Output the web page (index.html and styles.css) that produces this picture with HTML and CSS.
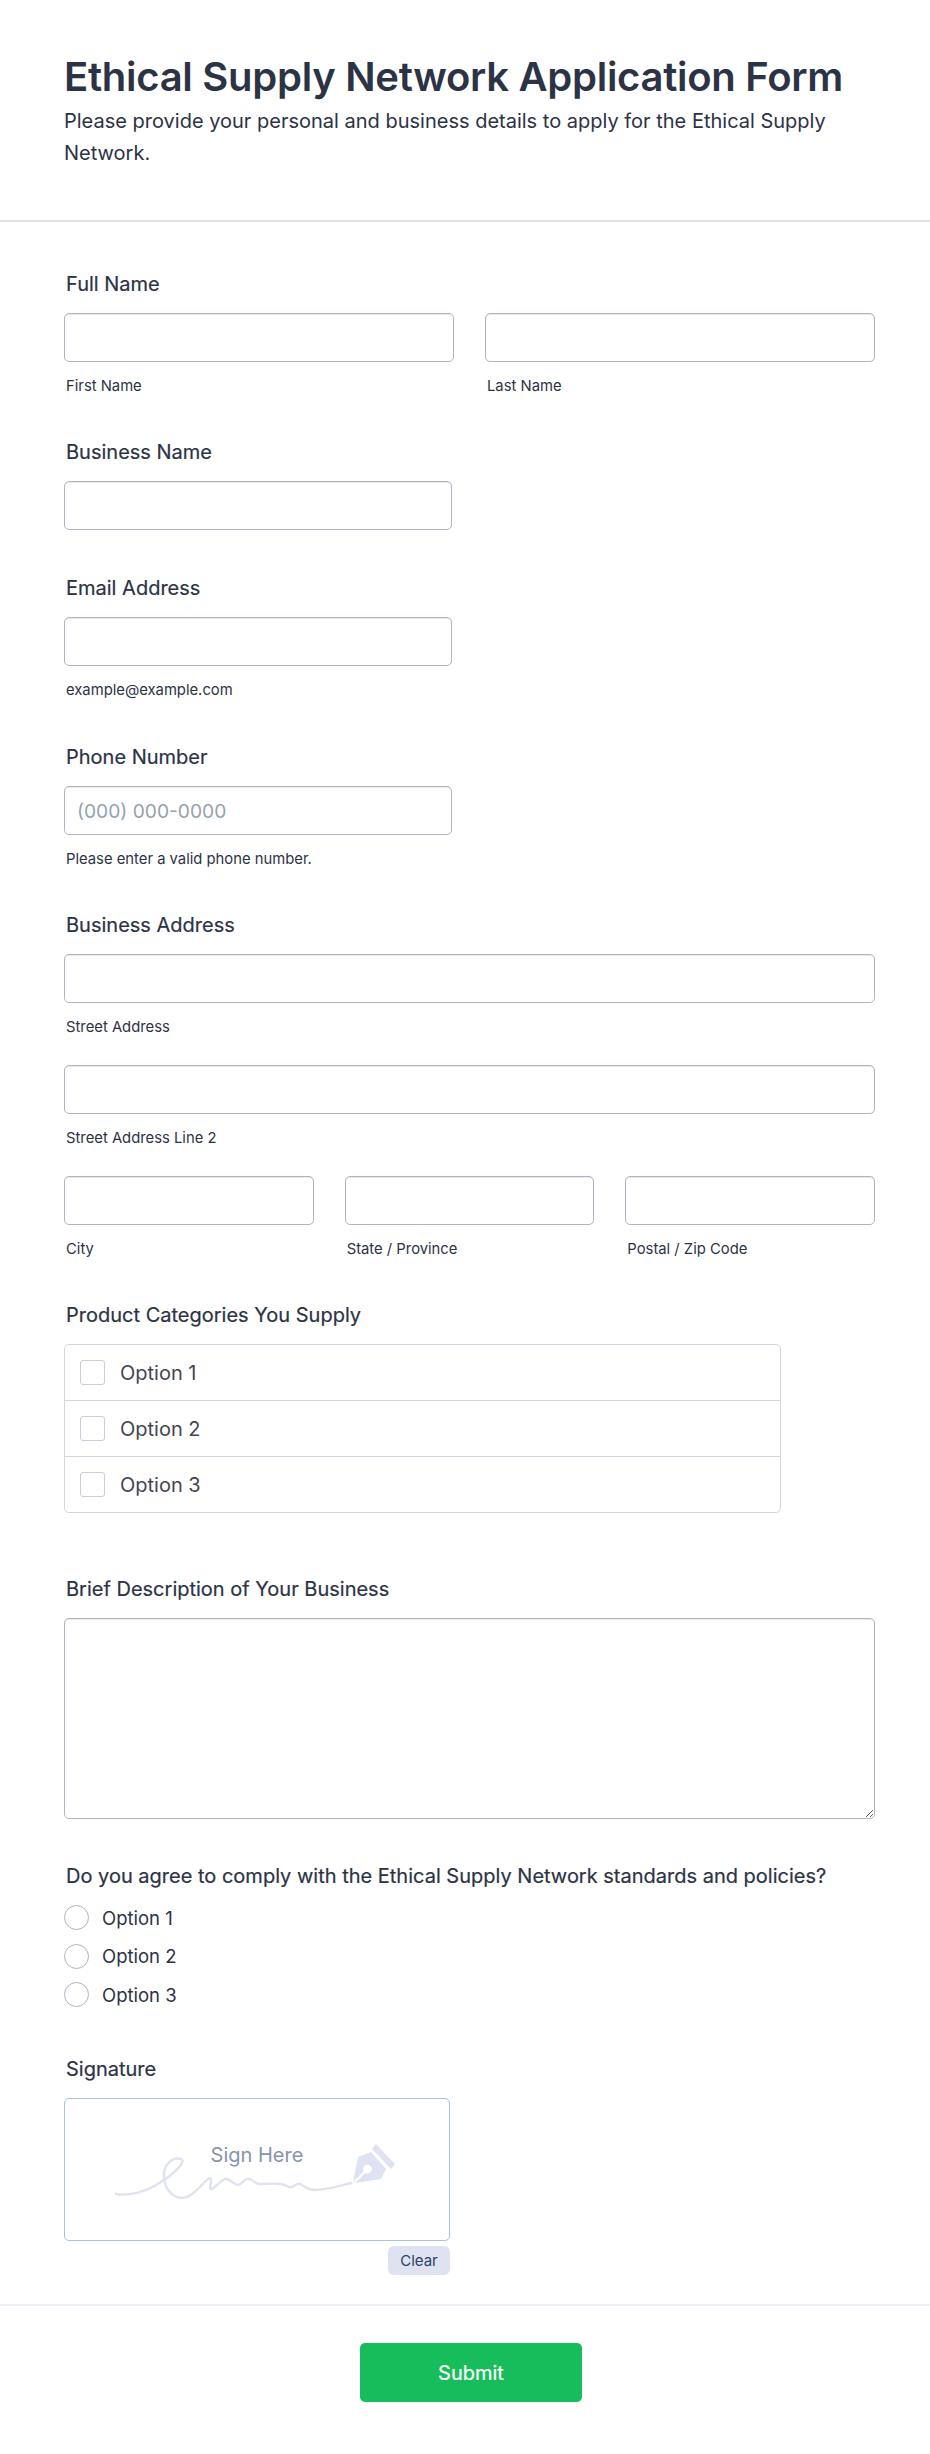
FILE: index.html
```html
<!DOCTYPE html>
<html lang="en">
<head>
    <meta charset="UTF-8">
    <title>Ethical Supply Network Application Form</title>
    <link rel="stylesheet" href="styles.css">
</head>
<body>
    <div class="form-header">
        <h1>Ethical Supply Network Application Form</h1>
        <p>Please provide your personal and business details to apply for the Ethical Supply Network.</p>
    </div>

    <form class="form-body">
        <div class="field field-name">
            <label class="field-label">Full Name</label>
            <div class="row">
                <div class="col">
                    <input type="text" class="input">
                    <div class="sublabel">First Name</div>
                </div>
                <div class="col">
                    <input type="text" class="input">
                    <div class="sublabel">Last Name</div>
                </div>
            </div>
        </div>

        <div class="field field-business">
            <label class="field-label">Business Name</label>
            <input type="text" class="input input-short">
        </div>

        <div class="field field-email">
            <label class="field-label">Email Address</label>
            <input type="text" class="input input-short">
            <div class="sublabel">example@example.com</div>
        </div>

        <div class="field field-phone">
            <label class="field-label">Phone Number</label>
            <input type="text" class="input input-short" placeholder="(000) 000-0000">
            <div class="sublabel">Please enter a valid phone number.</div>
        </div>

        <div class="field field-address">
            <label class="field-label">Business Address</label>
            <input type="text" class="input">
            <div class="sublabel">Street Address</div>
            <input type="text" class="input address-line">
            <div class="sublabel">Street Address Line 2</div>
            <div class="row row-three address-line">
                <div class="col">
                    <input type="text" class="input">
                    <div class="sublabel">City</div>
                </div>
                <div class="col">
                    <input type="text" class="input">
                    <div class="sublabel">State / Province</div>
                </div>
                <div class="col">
                    <input type="text" class="input">
                    <div class="sublabel">Postal / Zip Code</div>
                </div>
            </div>
        </div>

        <div class="field field-categories">
            <label class="field-label">Product Categories You Supply</label>
            <div class="check-list">
                <div class="check-item"><span class="checkbox"></span>Option 1</div>
                <div class="check-item"><span class="checkbox"></span>Option 2</div>
                <div class="check-item"><span class="checkbox"></span>Option 3</div>
            </div>
        </div>

        <div class="field field-description">
            <label class="field-label">Brief Description of Your Business</label>
            <textarea class="textarea"></textarea>
        </div>

        <div class="field field-agree">
            <label class="field-label">Do you agree to comply with the Ethical Supply Network standards and policies?</label>
            <div class="radio-list">
                <div class="radio-item"><span class="radio"></span>Option 1</div>
                <div class="radio-item"><span class="radio"></span>Option 2</div>
                <div class="radio-item"><span class="radio"></span>Option 3</div>
            </div>
        </div>

        <div class="field field-signature">
            <label class="field-label">Signature</label>
            <div class="signature-wrap">
                <div class="signature-pad">
                    <span class="sign-here">Sign Here</span>
                    <svg class="sign-art" width="384" height="141" viewBox="0 0 384 141">
                        <!-- scribble -->
                        <path d="M51 95 C62 97 80 94 96 83 C110 74 122 62 116 60 C106 57 98 68 99 77 C99 88 106 98 116 99 C124 99 130 93 136 87 C140 83 145 77 146 80 C147 85 143 91 147 90 C151 88 155 82 160 80 C166 79 168 86 173 86 C178 85 179 79 184 80 C189 81 190 85 195 85 C202 85 208 84 216 85 C222 86 224 89 227 88 C230 87 231 84 235 85 C240 87 242 91 250 91 C262 91 274 87 286 84" fill="none" stroke="#dfe3f1" stroke-width="2.4" stroke-linecap="round"/>
                        <!-- pen nib -->
                        <path fill-rule="evenodd" d="M288 83 L293 58 L306 53 L321 70 L316 80 L290 84 L300 74 A4.5 4.5 0 1 0 298.500 72.500 Z" fill="#dfe3f1"/>
                        <path d="M311 45 L330 65 L326 70 L307 50 Z" fill="#dfe3f1"/>
                    </svg>
                </div>
                <div class="clear-row"><button type="button" class="clear-btn">Clear</button></div>
            </div>
        </div>
    </form>

    <div class="form-footer">
        <button type="button" class="submit-btn">Submit</button>
    </div>
</body>
</html>
```

FILE: styles.css
```css
:root {
    --text: #2c3345;
    --line: #b0b3c2;
    --soft-line: #d3d6e2;
    --accent: #dfe3f1;
}

* {
    box-sizing: border-box;
}

body {
    font-family: Inter, "Liberation Sans", sans-serif;
    background-color: #fff;
    color: var(--text);
    margin: 0;
    padding: 0;
}

.form-header {
    height: 222px;
    padding: 52px 64px 0;
    border-bottom: 2px solid #dfe1ea;
}

.form-header h1 {
    margin: 0;
    font-size: 40px;
    line-height: 50px;
    font-weight: 600;
    letter-spacing: -0.28px;
}

.form-header p {
    margin: 3px 0 0;
    font-size: 20px;
    line-height: 32px;
}

.form-body {
    padding: 0 55px 0 64px;
}

.field-label {
    display: block;
    margin: 0 0 17px 2px;
    font-size: 20px;
    line-height: 24px;
    font-weight: 400;
    -webkit-text-stroke: 0.2px;
}

.field-name { padding-top: 50px; }
.field-business { padding-top: 42px; }
.field-email { padding-top: 46px; }
.field-phone { padding-top: 43px; }
.field-address { padding-top: 42px; }
.field-categories { padding-top: 42px; }
.field-description { padding-top: 64px; }
.field-agree { padding-top: 45px; }
.field-signature { padding-top: 50px; }

.row {
    display: grid;
    grid-template-columns: 1fr 1fr;
    gap: 31px;
}

.row-three {
    grid-template-columns: 1fr 1fr 1fr;
}

.input {
    display: block;
    width: 100%;
    height: 49px;
    padding: 0 12px;
    border: 1px solid var(--line);
    border-radius: 5px;
    box-shadow: inset 0 1px 0 #e8e9ef;
    background: #fff;
    font-family: inherit;
    font-size: 19.2px;
    color: var(--text);
    outline: none;
}

.input::placeholder {
    color: #94a3ad;
    opacity: 1;
}

.input-short {
    width: 388px;
}

.sublabel {
    margin: 12px 0 0 2px;
    font-size: 14.8px;
    line-height: 24px;
}

.address-line {
    margin-top: 26px;
}

.check-list {
    width: 717px;
    border: 1px solid var(--soft-line);
    border-radius: 5px;
}

.check-item {
    display: flex;
    align-items: center;
    height: 56px;
    padding-left: 15px;
    font-size: 20px;
    color: #45454f;
    border-bottom: 1px solid var(--soft-line);
}

.check-item:last-child {
    height: 55px;
    border-bottom: none;
}

.checkbox {
    width: 25px;
    height: 25px;
    margin-right: 15px;
    border: 1px solid #c8cede;
    border-radius: 3px;
}

.textarea {
    display: block;
    width: 100%;
    height: 201px;
    border: 1px solid var(--line);
    border-radius: 5px;
    box-shadow: inset 0 1px 0 #e8e9ef;
    outline: none;
    font-family: inherit;
}

.radio-list {
    display: flex;
    flex-direction: column;
    gap: 13.5px;
    margin-top: 2px;
}

.radio-item {
    display: flex;
    align-items: center;
    height: 25px;
    font-size: 18.5px;
}

.radio {
    width: 25px;
    height: 25px;
    margin-right: 13px;
    border: 1px solid var(--line);
    border-radius: 50%;
}

.signature-wrap {
    width: 386px;
}

.signature-pad {
    position: relative;
    height: 143px;
    border: 1px solid #a8c2e0;
    border-radius: 5px;
    text-align: center;
}

.sign-here {
    display: block;
    padding-top: 42px;
    font-size: 20px;
    line-height: 28px;
    color: #8894ab;
}

.sign-art {
    position: absolute;
    left: 0;
    top: 0;
}

.clear-row {
    display: flex;
    justify-content: flex-end;
    margin-top: 5px;
}

.clear-btn {
    width: 62px;
    height: 29px;
    padding: 0;
    border: none;
    border-radius: 6px;
    background-color: var(--accent);
    font-family: inherit;
    font-size: 15px;
    color: #2c3f6b;
}

.form-footer {
    margin-top: 29px;
    height: 148px;
    padding: 37px 0 0 12px;
    border-top: 2px solid #eceef5;
    text-align: center;
}

.submit-btn {
    width: 222px;
    height: 59px;
    border: none;
    border-radius: 5px;
    background-color: #18bd5b;
    color: #fff;
    font-family: inherit;
    font-size: 20px;
    font-weight: 400;
    -webkit-text-stroke: 0.2px;
}
```
